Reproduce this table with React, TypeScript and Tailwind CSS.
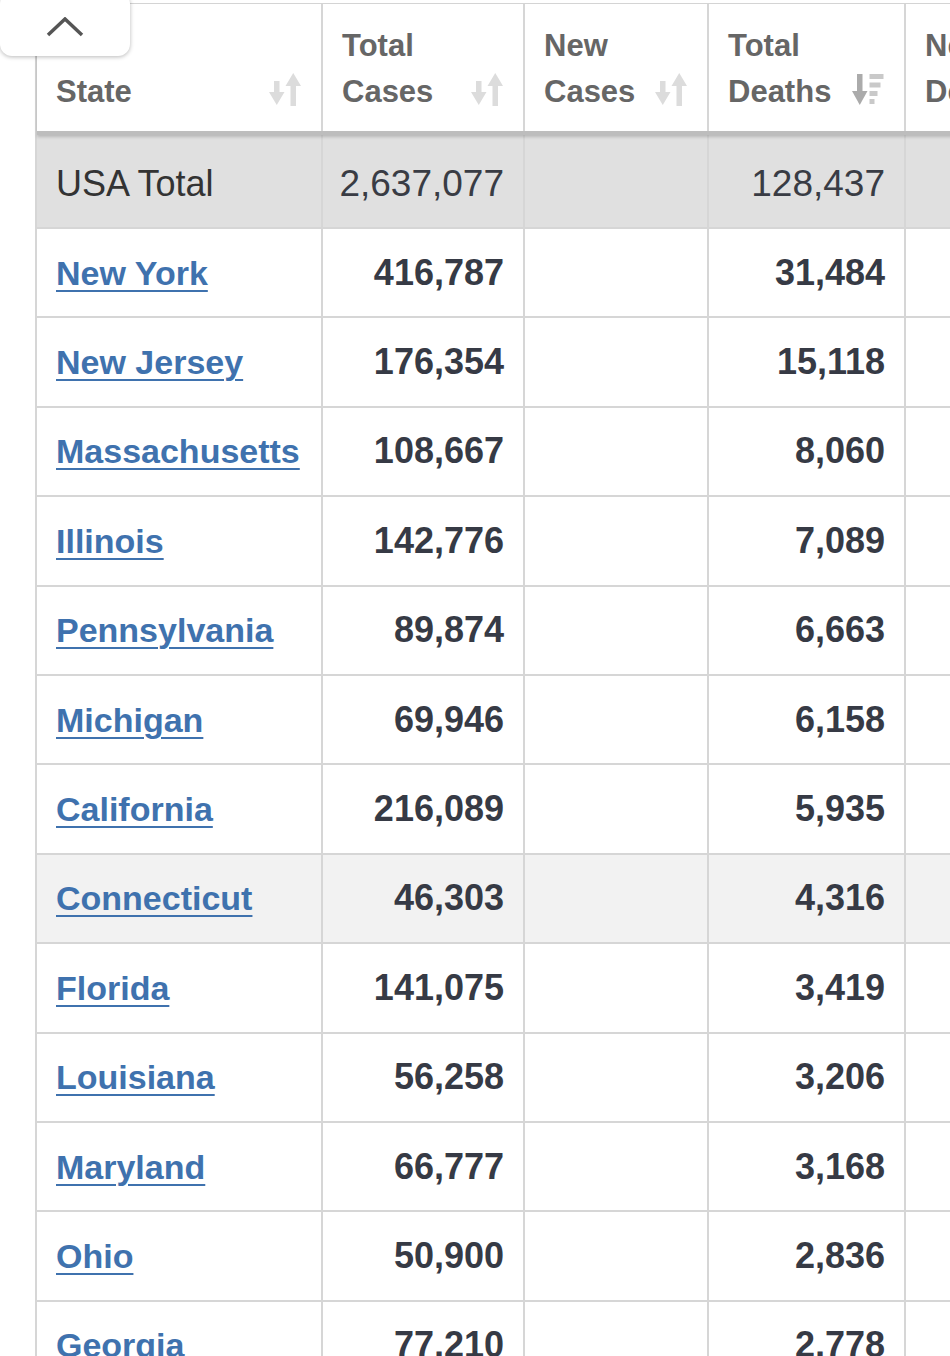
import React from 'react'

type Row = { state: string; cases: string; deaths: string; hover?: boolean }

const rows: Row[] = [
  { state: 'New York', cases: '416,787', deaths: '31,484' },
  { state: 'New Jersey', cases: '176,354', deaths: '15,118' },
  { state: 'Massachusetts', cases: '108,667', deaths: '8,060' },
  { state: 'Illinois', cases: '142,776', deaths: '7,089' },
  { state: 'Pennsylvania', cases: '89,874', deaths: '6,663' },
  { state: 'Michigan', cases: '69,946', deaths: '6,158' },
  { state: 'California', cases: '216,089', deaths: '5,935' },
  { state: 'Connecticut', cases: '46,303', deaths: '4,316', hover: true },
  { state: 'Florida', cases: '141,075', deaths: '3,419' },
  { state: 'Louisiana', cases: '56,258', deaths: '3,206' },
  { state: 'Maryland', cases: '66,777', deaths: '3,168' },
  { state: 'Ohio', cases: '50,900', deaths: '2,836' },
  { state: 'Georgia', cases: '77,210', deaths: '2,778' },
]

function SortIcon() {
  return (
    <svg width="32" height="33" viewBox="0 0 32 33" className="mb-[9px] shrink-0" fill="#dcdcdc">
      {/* down arrow */}
      <rect x="5" y="8" width="5.5" height="15" />
      <polygon points="0,19 15.5,19 7.75,32" />
      {/* up arrow */}
      <rect x="21.5" y="10" width="5.5" height="23" />
      <polygon points="16.5,13 32,13 24.25,0" />
    </svg>
  )
}

function SortDescIcon() {
  return (
    <svg width="32" height="33" viewBox="0 0 32 33" className="mb-[9px] shrink-0">
      <rect x="5" y="1" width="5.5" height="21" fill="#ababab" />
      <polygon points="0,18 15.5,18 7.75,32" fill="#ababab" />
      <rect x="17.5" y="1" width="14" height="5" fill="#c9c9c9" />
      <rect x="17.5" y="9.5" width="11" height="5" fill="#c9c9c9" />
      <rect x="17.5" y="18" width="8" height="5" fill="#c9c9c9" />
      <rect x="17.5" y="26" width="5" height="5" fill="#c9c9c9" />
    </svg>
  )
}

const grid = 'grid grid-cols-[286px_202px_184px_197px_240px]'
const cell = 'border-r-2 border-[#d6d6d6]'

function HeaderCell({ lines, icon }: { lines: string[]; icon?: 'sort' | 'desc' }) {
  return (
    <div className={`${cell} flex items-end justify-between pl-[19px] pr-[20px] pb-[16px]`}>
      <div className="text-[31px] font-bold leading-[46px] text-[#666666]">
        {lines.map((line) => (
          <div key={line} className="whitespace-nowrap">
            {line}
          </div>
        ))}
      </div>
      {icon === 'sort' && <SortIcon />}
      {icon === 'desc' && <SortDescIcon />}
    </div>
  )
}

export default function App() {
  return (
    <div className="relative h-[1356px] w-[950px] overflow-hidden bg-white font-['Liberation_Sans',Arial,sans-serif]">
      <div className="pl-[35px] pt-[3px]">
        <div className="w-[1200px] border-l-2 border-t border-[#d6d6d6]">
          {/* header */}
          <div className={`${grid} relative z-10 h-[131px] border-b-[4px] border-[#bdbdbd] bg-white shadow-[0_2px_3px_rgba(0,0,0,0.18)]`}>
            <HeaderCell lines={['State']} icon="sort" />
            <HeaderCell lines={['Total', 'Cases']} icon="sort" />
            <HeaderCell lines={['New', 'Cases']} icon="sort" />
            <HeaderCell lines={['Total', 'Deaths']} icon="desc" />
            <HeaderCell lines={['New', 'Deaths']} icon="sort" />
          </div>

          {/* total row */}
          <div className={`${grid} h-[94px] border-b-2 border-[#d6d6d6] bg-[#e0e0e0] text-[37px] leading-none text-[#393c44]`}>
            <div className={`${cell} flex items-center pl-[19px] pt-[5px] text-[36px] text-[#333333]`}>USA Total</div>
            <div className={`${cell} flex items-center justify-end pr-[19px] pt-[5px]`}>2,637,077</div>
            <div className={cell} />
            <div className={`${cell} flex items-center justify-end pr-[19px] pt-[5px]`}>128,437</div>
            <div className={cell} />
          </div>

          {/* state rows */}
          {rows.map((row) => (
            <div
              key={row.state}
              className={`${grid} h-[89.4px] border-b-2 border-[#d6d6d6] ${row.hover ? 'bg-[#f2f2f2]' : 'bg-white'}`}
            >
              <div className={`${cell} flex items-center pl-[19px]`}>
                <a
                  href="#"
                  className="whitespace-nowrap text-[34px] font-bold leading-none text-[#3f72ae] underline decoration-2 underline-offset-[5px]"
                >
                  {row.state}
                </a>
              </div>
              <div className={`${cell} flex items-center justify-end pr-[19px] text-[36px] font-bold leading-none text-[#363a45]`}>
                {row.cases}
              </div>
              <div className={cell} />
              <div className={`${cell} flex items-center justify-end pr-[19px] text-[36px] font-bold leading-none text-[#363a45]`}>
                {row.deaths}
              </div>
              <div className={cell} />
            </div>
          ))}
        </div>
      </div>

      {/* collapse tab over the corner */}
      <button
        type="button"
        aria-label="Collapse"
        className="absolute left-0 top-[-8px] z-20 flex h-[64px] w-[130px] items-end justify-center rounded-[12px] bg-white pb-[19px] shadow-[0_1px_4px_rgba(0,0,0,0.28)]"
      >
        <svg width="38" height="20" viewBox="0 0 38 20" fill="none" stroke="#555555" strokeWidth="3.5" strokeLinecap="butt">
          <polyline points="2,18 19,2 36,18" />
        </svg>
      </button>
    </div>
  )
}
